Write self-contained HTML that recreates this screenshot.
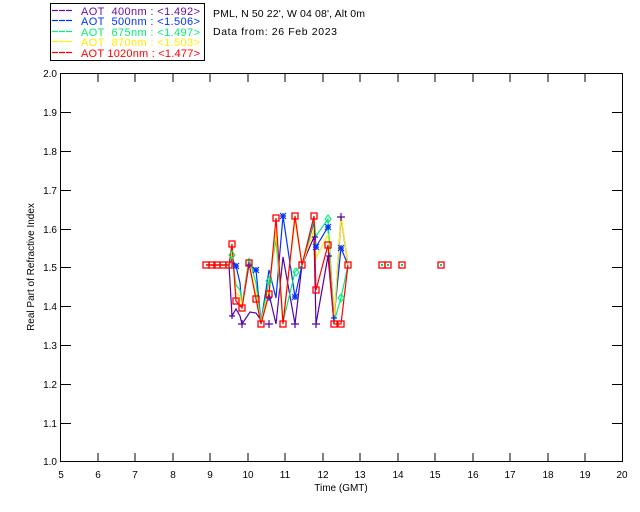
<!DOCTYPE html>
<html><head><meta charset="utf-8"><style>
html,body{margin:0;padding:0;background:#fff;}
svg{display:block;font-family:"Liberation Sans",sans-serif;}
</style></head><body>
<svg width="640" height="512" viewBox="0 0 640 512" xmlns="http://www.w3.org/2000/svg">
<rect width="640" height="512" fill="#fff"/>
<rect x="50.5" y="3.5" width="154" height="57" fill="none" stroke="#000"/>
<g stroke-width="1.2" stroke-dasharray="6,1">
<path d="M52 10.5h21" stroke="#6a0dad"/>
<path d="M52 20.5h21" stroke="#0033ff"/>
<path d="M52 31.5h21" stroke="#00ee77"/>
<path d="M52 41.5h21" stroke="#ffee00"/>
<path d="M52 52.5h21" stroke="#ff0000"/>
</g>
<g font-size="11">
<text x="81" y="15" fill="#6a0dad" textLength="119" lengthAdjust="spacing" xml:space="preserve">AOT  400nm : &lt;1.492&gt;</text>
<text x="81" y="25" fill="#0033ff" textLength="119" lengthAdjust="spacing" xml:space="preserve">AOT  500nm : &lt;1.506&gt;</text>
<text x="81" y="36" fill="#00ee77" textLength="119" lengthAdjust="spacing" xml:space="preserve">AOT  675nm : &lt;1.497&gt;</text>
<text x="81" y="46" fill="#ffee00" textLength="119" lengthAdjust="spacing" xml:space="preserve">AOT  870nm : &lt;1.503&gt;</text>
<text x="81" y="57" fill="#ff0000" textLength="119" lengthAdjust="spacing" xml:space="preserve">AOT 1020nm : &lt;1.477&gt;</text>
</g>
<g font-size="10.5" fill="#000">
<text x="213" y="17" textLength="152" lengthAdjust="spacing">PML, N 50 22', W 04 08', Alt 0m</text>
<text x="213" y="35" textLength="124" lengthAdjust="spacing">Data from: 26 Feb 2023</text>
</g>
<rect x="60.5" y="73.5" width="562" height="388" fill="none" stroke="#000"/>
<g stroke="#000">
<path d="M98 461v-8M135 461v-8M173 461v-8M210 461v-8M248 461v-8M285 461v-8M323 461v-8M360 461v-8M398 461v-8M435 461v-8M473 461v-8M510 461v-8M548 461v-8M585 461v-8
M98 74v8M135 74v8M173 74v8M210 74v8M248 74v8M285 74v8M323 74v8M360 74v8M398 74v8M435 74v8M473 74v8M510 74v8M548 74v8M585 74v8
M61 112.5h10M61 151.5h10M61 190.5h10M61 229.5h10M61 267.5h10M61 306.5h10M61 345.5h10M61 384.5h10M61 423.5h10
M622 112.5h-10M622 151.5h-10M622 190.5h-10M622 229.5h-10M622 267.5h-10M622 306.5h-10M622 345.5h-10M622 384.5h-10M622 423.5h-10"/>
</g>
<g font-size="10" fill="#000" text-anchor="end">
<text x="57" y="77">2.0</text><text x="57" y="116">1.9</text><text x="57" y="155">1.8</text><text x="57" y="194">1.7</text><text x="57" y="233">1.6</text><text x="57" y="271">1.5</text><text x="57" y="310">1.4</text><text x="57" y="349">1.3</text><text x="57" y="388">1.2</text><text x="57" y="427">1.1</text><text x="57" y="465">1.0</text>
</g>
<g font-size="10" fill="#000" text-anchor="middle">
<text x="61" y="478">5</text><text x="98" y="478">6</text><text x="135" y="478">7</text><text x="173" y="478">8</text><text x="210" y="478">9</text><text x="248" y="478">10</text><text x="285" y="478">11</text><text x="323" y="478">12</text><text x="360" y="478">13</text><text x="398" y="478">14</text><text x="435" y="478">15</text><text x="473" y="478">16</text><text x="510" y="478">17</text><text x="548" y="478">18</text><text x="585" y="478">19</text><text x="622" y="478">20</text>
<text x="341" y="491">Time (GMT)</text>
</g>
<text font-size="10" fill="#000" text-anchor="middle" transform="translate(34,267) rotate(-90)">Real Part of Refractive Index</text>
<g fill="none" stroke-width="1.2">
<polyline stroke="#5500aa" points="206,265 229,265 232,316 236,309 240,316 242,324 250,312 256,313 261,320 269,294 276,324 283,257 295,324 302,265 314,237 316,324 328,256 334,324 341,217 348,265"/>
<polyline stroke="#0033ff" points="206,265 229,265 232,259 236,266 240,283 242,307 249,265 256,270 261,322 269,270 276,298 283,216 295,297 302,265 314,222 316,247 328,227 334,318 341,248 348,265"/>
<polyline stroke="#00ee77" points="206,265 229,265 232,255 236,285 240,290 242,305 249,258 256,283 261,322 269,281 276,240 283,322 295,272 302,265 314,220 316,236 328,219 334,322 341,298 348,265"/>
<polyline stroke="#ffee00" points="206,265 229,265 232,251 236,293 240,296 242,306 249,262 256,295 261,323 269,289 276,230 283,322 295,220 302,265 314,230 316,258 328,235 334,322 341,216 348,265"/>
<polyline stroke="#ff0000" points="206,265 229,265 232,244 236,301 242,308 249,263 256,299 261,324 269,294 276,218 283,324 295,216 302,265 314,216 316,290 328,245 334,324 341,324 348,265"/>
</g>
<g stroke="#5500aa" stroke-width="1.2">
<path d="M229 316h6M232 313v6M238 324h8M242 320v8M265 324h8M269 320v8M291 324h8M295 320v8M312 324h8M316 320v8M312 237h6M315 234v6M326 256h6M329 253v6M337 217h8M341 213v8"/>
</g>
<g stroke="#0033ff" stroke-width="1.2">
<path d="M233 266h6M236 263v6M233 263l6 6M239 263l-6 6M246 265h6M249 262v6M253 270h6M256 267v6M253 267l6 6M259 267l-6 6M266 298h6M269 295v6M280 216h6M283 213v6M280 213l6 6M286 213l-6 6M292 297h6M295 294v6M292 294l6 6M298 294l-6 6M313 247h6M316 244v6M313 244l6 6M319 244l-6 6M325 227h6M328 224v6M325 224l6 6M331 224l-6 6M331 318h6M334 315v6M338 248h6M341 245v6M338 245l6 6M344 245l-6 6"/>
</g>
<g fill="none" stroke="#00ee77" stroke-width="1.1">
<path d="M296 268l3 4-3 4-3-4zM328 215l3 4-3 4-3-4zM341 294l3 4-3 4-3-4zM269 277l3 4-3 4-3-4zM232 251l3 4-3 4-3-4z"/>
</g>
<g fill="none" stroke="#ff0000" stroke-width="1.3">
<rect x="203" y="262" width="6" height="6"/><rect x="209" y="262" width="6" height="6"/><rect x="214" y="262" width="6" height="6"/><rect x="220" y="262" width="6" height="6"/><rect x="226" y="262" width="6" height="6"/>
<rect x="229" y="241" width="6" height="6"/><rect x="233" y="298" width="6" height="6"/><rect x="239" y="305" width="6" height="6"/><rect x="246" y="260" width="6" height="6"/><rect x="253" y="296" width="6" height="6"/><rect x="258" y="321" width="6" height="6"/><rect x="266" y="291" width="6" height="6"/><rect x="273" y="215" width="6" height="6"/><rect x="280" y="321" width="6" height="6"/><rect x="292" y="213" width="6" height="6"/><rect x="299" y="262" width="6" height="6"/><rect x="311" y="213" width="6" height="6"/><rect x="313" y="287" width="6" height="6"/><rect x="325" y="242" width="6" height="6"/><rect x="331" y="321" width="6" height="6"/><rect x="338" y="321" width="6" height="6"/><rect x="345" y="262" width="6" height="6"/>
<rect x="379" y="262" width="6" height="6"/><rect x="385" y="262" width="6" height="6"/><rect x="399" y="262" width="6" height="6"/><rect x="438" y="262" width="6" height="6"/>
</g>
<g fill="#00cc99">
<rect x="381" y="264" width="2" height="2"/><rect x="387" y="264" width="2" height="2"/><rect x="401" y="264" width="2" height="2"/><rect x="440" y="264" width="2" height="2"/>
</g>
</svg>
</body></html>
